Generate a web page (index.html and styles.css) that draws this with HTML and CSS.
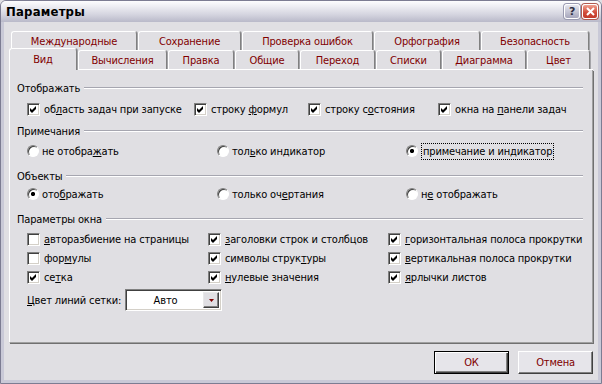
FILE: index.html
```html
<!DOCTYPE html>
<html lang="ru">
<head>
<meta charset="utf-8">
<title>Параметры</title>
<link rel="stylesheet" href="styles.css">
</head>
<body>
<div class="window">
  <div class="titlebar">
    <span class="title">Параметры</span>
    <div class="tb-buttons">
      <div class="tb-btn help">?</div>
      <div class="tb-btn close">
        <svg width="9" height="9" viewBox="0 0 9 9"><path d="M1 1 L8 8 M8 1 L1 8" stroke="#fff" stroke-width="2" fill="none"/></svg>
      </div>
    </div>
  </div>
  <div class="client">
    <div class="tab-row back">
      <div class="tab">Международные</div>
      <div class="tab">Сохранение</div>
      <div class="tab">Проверка ошибок</div>
      <div class="tab">Орфография</div>
      <div class="tab">Безопасность</div>
    </div>
    <div class="tab-row front">
      <div class="tab selected">Вид</div>
      <div class="tab">Вычисления</div>
      <div class="tab">Правка</div>
      <div class="tab">Общие</div>
      <div class="tab">Переход</div>
      <div class="tab">Списки</div>
      <div class="tab">Диаграмма</div>
      <div class="tab">Цвет</div>
    </div>
    <div class="panel">
      <div class="gh g1"><span>Отображать</span><i class="line"></i></div>
      <div class="row show-row">
        <label class="item"><span class="cb on"><svg width="7" height="7" viewBox="0 0 7 7"><path d="M0 2 L2 4 L6 0 L6 3 L2 7 L0 5 Z" fill="#000"/></svg></span><span class="txt">об<u>л</u>асть задач при запуске</span></label>
        <label class="item"><span class="cb on"><svg width="7" height="7" viewBox="0 0 7 7"><path d="M0 2 L2 4 L6 0 L6 3 L2 7 L0 5 Z" fill="#000"/></svg></span><span class="txt">строку <u>ф</u>ормул</span></label>
        <label class="item"><span class="cb on"><svg width="7" height="7" viewBox="0 0 7 7"><path d="M0 2 L2 4 L6 0 L6 3 L2 7 L0 5 Z" fill="#000"/></svg></span><span class="txt">строку с<u>о</u>стояния</span></label>
        <label class="item"><span class="cb on"><svg width="7" height="7" viewBox="0 0 7 7"><path d="M0 2 L2 4 L6 0 L6 3 L2 7 L0 5 Z" fill="#000"/></svg></span><span class="txt">окна на <u>п</u>анели задач</span></label>
      </div>
      <div class="gh g2"><span>Примечания</span><i class="line"></i></div>
      <div class="row radio-row r1">
        <label class="item"><span class="radio"></span><span class="txt">не отобра<u>ж</u>ать</span></label>
        <label class="item"><span class="radio"></span><span class="txt">тол<u>ь</u>ко индикатор</span></label>
        <label class="item"><span class="radio on"></span><span class="txt focus">примечание и индикатор</span></label>
      </div>
      <div class="gh g3"><span>Объекты</span><i class="line"></i></div>
      <div class="row radio-row r2">
        <label class="item"><span class="radio on"></span><span class="txt">ото<u>б</u>ражать</span></label>
        <label class="item"><span class="radio"></span><span class="txt">только оч<u>е</u>ртания</span></label>
        <label class="item"><span class="radio"></span><span class="txt">н<u>е</u> отображать</span></label>
      </div>
      <div class="gh g4"><span>Параметры окна</span><i class="line"></i></div>
      <div class="win-grid">
        <label class="item"><span class="cb"></span><span class="txt"><u>а</u>вторазбиение на страницы</span></label>
        <label class="item"><span class="cb on"><svg width="7" height="7" viewBox="0 0 7 7"><path d="M0 2 L2 4 L6 0 L6 3 L2 7 L0 5 Z" fill="#000"/></svg></span><span class="txt"><u>з</u>аголовки строк и столбцов</span></label>
        <label class="item"><span class="cb on"><svg width="7" height="7" viewBox="0 0 7 7"><path d="M0 2 L2 4 L6 0 L6 3 L2 7 L0 5 Z" fill="#000"/></svg></span><span class="txt"><u>г</u>оризонтальная полоса прокрутки</span></label>
        <label class="item"><span class="cb"></span><span class="txt">фор<u>м</u>улы</span></label>
        <label class="item"><span class="cb on"><svg width="7" height="7" viewBox="0 0 7 7"><path d="M0 2 L2 4 L6 0 L6 3 L2 7 L0 5 Z" fill="#000"/></svg></span><span class="txt">символы струк<u>т</u>уры</span></label>
        <label class="item"><span class="cb on"><svg width="7" height="7" viewBox="0 0 7 7"><path d="M0 2 L2 4 L6 0 L6 3 L2 7 L0 5 Z" fill="#000"/></svg></span><span class="txt"><u>в</u>ертикальная полоса прокрутки</span></label>
        <label class="item"><span class="cb on"><svg width="7" height="7" viewBox="0 0 7 7"><path d="M0 2 L2 4 L6 0 L6 3 L2 7 L0 5 Z" fill="#000"/></svg></span><span class="txt">се<u>т</u>ка</span></label>
        <label class="item"><span class="cb on"><svg width="7" height="7" viewBox="0 0 7 7"><path d="M0 2 L2 4 L6 0 L6 3 L2 7 L0 5 Z" fill="#000"/></svg></span><span class="txt"><u>н</u>улевые значения</span></label>
        <label class="item"><span class="cb on"><svg width="7" height="7" viewBox="0 0 7 7"><path d="M0 2 L2 4 L6 0 L6 3 L2 7 L0 5 Z" fill="#000"/></svg></span><span class="txt"><u>я</u>рлычки листов</span></label>
      </div>
      <div class="colorline">
        <span class="cl-label"><u>Ц</u>вет линий сетки:</span>
        <div class="combo">
          <span class="combo-text">Авто</span>
          <span class="combo-btn"><svg width="5" height="3" viewBox="0 0 5 3"><path d="M0 0 H5 L2.5 3 Z" fill="#800000"/></svg></span>
        </div>
      </div>
    </div>
    <div class="buttons">
      <div class="btn default">ОК</div>
      <div class="btn">Отмена</div>
    </div>
  </div>
</div>
</body>
</html>
```
FILE: styles.css
```css
body {
  margin: 0;
  font-family: "Tahoma", "DejaVu Sans Condensed", "DejaVu Sans", sans-serif;
  font-size: 11px;
  letter-spacing: -0.15px;
  color: #000;
  background: #e0dfe3;
}

.window {
  width: 602px;
  height: 384px;
  box-sizing: border-box;
  border: 1px solid #7c7c92;
  border-radius: 6px 6px 0 0;
  display: flex;
  flex-direction: column;
  background: #e0dfe3;
  overflow: hidden;
}

.titlebar {
  height: 21px;
  flex: none;
  display: flex;
  align-items: center;
  justify-content: space-between;
  padding: 0 3px 0 5px;
  background: linear-gradient(#fdfdfe 0%, #eeeef3 25%, #d4d4df 65%, #b9b9c9 100%);
}

.title {
  font-weight: bold;
  font-size: 13px;
  letter-spacing: 0.2px;
  color: #000;
}

.tb-buttons {
  display: flex;
  gap: 2px;
}

.tb-btn {
  width: 15px;
  height: 15px;
  box-sizing: border-box;
  border-radius: 3px;
  display: flex;
  align-items: center;
  justify-content: center;
}

.help {
  width: 16px;
  border: 1px solid #ffffff;
  background: linear-gradient(#e6e6ee, #a6a6bc);
  box-shadow: 0 0 0 1px #9a9ab0;
  color: #2e2e40;
  font-weight: bold;
  font-size: 11px;
  font-family: "DejaVu Sans", sans-serif;
}

.close {
  width: 16px;
  border: 1px solid #ffffff;
  background: linear-gradient(#f0a090, #d04a38 60%, #c23a2a);
  box-shadow: 0 0 0 1px #b05a50;
}

.client {
  flex: 1;
  border: 3px solid #c9c9d7;
  border-top: 0;
  padding: 9px 5px 0 5px;
  display: flex;
  flex-direction: column;
}

.tab-row {
  display: flex;
  flex: none;
}

.tab {
  box-sizing: border-box;
  border: 1px solid;
  border-color: #ffffff #808080 transparent #ffffff;
  border-bottom: 0;
  border-radius: 3px 3px 0 0;
  box-shadow: 1px 0 0 #a4a4a8;
  color: #800000;
  text-align: center;
  margin-right: 1px;
  white-space: nowrap;
  background: #e0dfe3;
}

.back {
  margin-left: 2px;
  height: 19px;
}

.back .tab {
  height: 19px;
  line-height: 19px;
}

.back .tab:nth-child(1) { width: 126px; }
.back .tab:nth-child(2) { width: 103px; }
.back .tab:nth-child(3) { width: 131px; }
.back .tab:nth-child(4) { width: 106px; }
.back .tab:nth-child(5) { width: 108px; }

.front {
  height: 19px;
  align-items: flex-end;
  border-bottom: 1px solid #ffffff;
}

.front .tab {
  height: 19px;
  line-height: 20px;
}

.front .tab.selected {
  height: 22px;
  margin-bottom: -1px;
  line-height: 21px;
}

.front .tab:nth-child(1) { width: 68px; }
.front .tab:nth-child(2) { width: 89px; }
.front .tab:nth-child(3) { width: 66px; }
.front .tab:nth-child(4) { width: 64px; }
.front .tab:nth-child(5) { width: 75px; }
.front .tab:nth-child(6) { width: 65px; }
.front .tab:nth-child(7) { width: 84px; }
.front .tab:nth-child(8) { width: 63px; }

.panel {
  height: 273px;
  flex: none;
  box-sizing: border-box;
  border-left: 1px solid #ffffff;
  border-right: 1px solid #a0a0a0;
  border-bottom: 1px solid #a0a0a0;
  box-shadow: 1px 1px 0 #707070;
  padding: 11px 9px 0 7px;
  display: flex;
  flex-direction: column;
}

.gh {
  display: flex;
  align-items: center;
  height: 14px;
  gap: 4px;
  white-space: nowrap;
}

.gh .line {
  flex: 1;
  height: 0;
  border-top: 1px solid #a6a6b0;
  border-bottom: 1px solid #ffffff;
}

.g2 { margin-top: 6px; }
.g3 { margin-top: 9px; }
.g4 { margin-top: 9px; }

.row {
  display: grid;
  height: 18px;
  align-items: center;
  padding-left: 10px;
}

.show-row {
  margin-top: 5px;
  grid-template-columns: 167px 114px 130px auto;
}

.radio-row {
  grid-template-columns: 190px 189px auto;
}

.r1 { margin-top: 4px; }
.r2 { margin-top: 2px; }

.item {
  display: flex;
  align-items: center;
  gap: 4px;
  white-space: nowrap;
}

.radio-row .item { gap: 3px; }

.txt {
  white-space: nowrap;
}

.cb {
  width: 13px;
  height: 13px;
  flex: none;
  box-sizing: border-box;
  border: 1px solid;
  border-color: #808080 #ffffff #ffffff #808080;
  box-shadow: inset 1px 1px 0 #404040, inset -1px -1px 0 #d4d0c8;
  background: #ffffff;
  display: flex;
  align-items: center;
  justify-content: center;
}

.radio {
  width: 12px;
  height: 12px;
  flex: none;
  box-sizing: border-box;
  border-radius: 50%;
  border: 1px solid;
  border-color: #808080 #ffffff #ffffff #808080;
  box-shadow: inset 1px 1px 0 #404040;
  background: #ffffff;
}

.radio.on {
  background: radial-gradient(circle at 50% 50%, #000 0, #000 1.8px, #fff 2.4px);
}

.focus {
  border: 1px dotted #000;
  padding: 1px 1px;
}

.win-grid {
  margin-top: 4px;
  padding-left: 10px;
  display: grid;
  grid-template-columns: 181px 180px auto;
  grid-auto-rows: 18px;
  row-gap: 1px;
  align-items: center;
}

.colorline {
  margin-top: 3px;
  padding-left: 10px;
  height: 22px;
  display: flex;
  align-items: center;
}

.cl-label {
  width: 98px;
  white-space: nowrap;
}

.combo {
  width: 97px;
  height: 22px;
  box-sizing: border-box;
  border: 1px solid;
  border-color: #808080 #ffffff #ffffff #808080;
  box-shadow: inset 1px 1px 0 #404040, inset -1px -1px 0 #d4d0c8;
  background: #ffffff;
  display: flex;
  align-items: stretch;
  padding: 2px;
}

.combo-text {
  flex: 1;
  display: flex;
  align-items: center;
  justify-content: center;
}

.combo-btn {
  width: 16px;
  box-sizing: border-box;
  border: 1px solid;
  border-color: #e8e8e8 #404040 #404040 #e8e8e8;
  box-shadow: inset -1px -1px 0 #808080;
  background: #e0dfe3;
  display: flex;
  align-items: center;
  justify-content: center;
}

.buttons {
  margin-top: 8px;
  display: flex;
  justify-content: flex-end;
  gap: 9px;
}

.btn {
  width: 75px;
  height: 23px;
  box-sizing: border-box;
  border: 1px solid;
  border-color: #ffffff #404040 #404040 #ffffff;
  box-shadow: inset -1px -1px 0 #808080;
  background: #e6e5ea;
  color: #800000;
  display: flex;
  align-items: center;
  justify-content: center;
}

.btn.default {
  border: 1px solid #000;
  box-shadow: inset 1px 1px 0 #ffffff, inset -1px -1px 0 #404040, inset -2px -2px 0 #808080;
}
```
